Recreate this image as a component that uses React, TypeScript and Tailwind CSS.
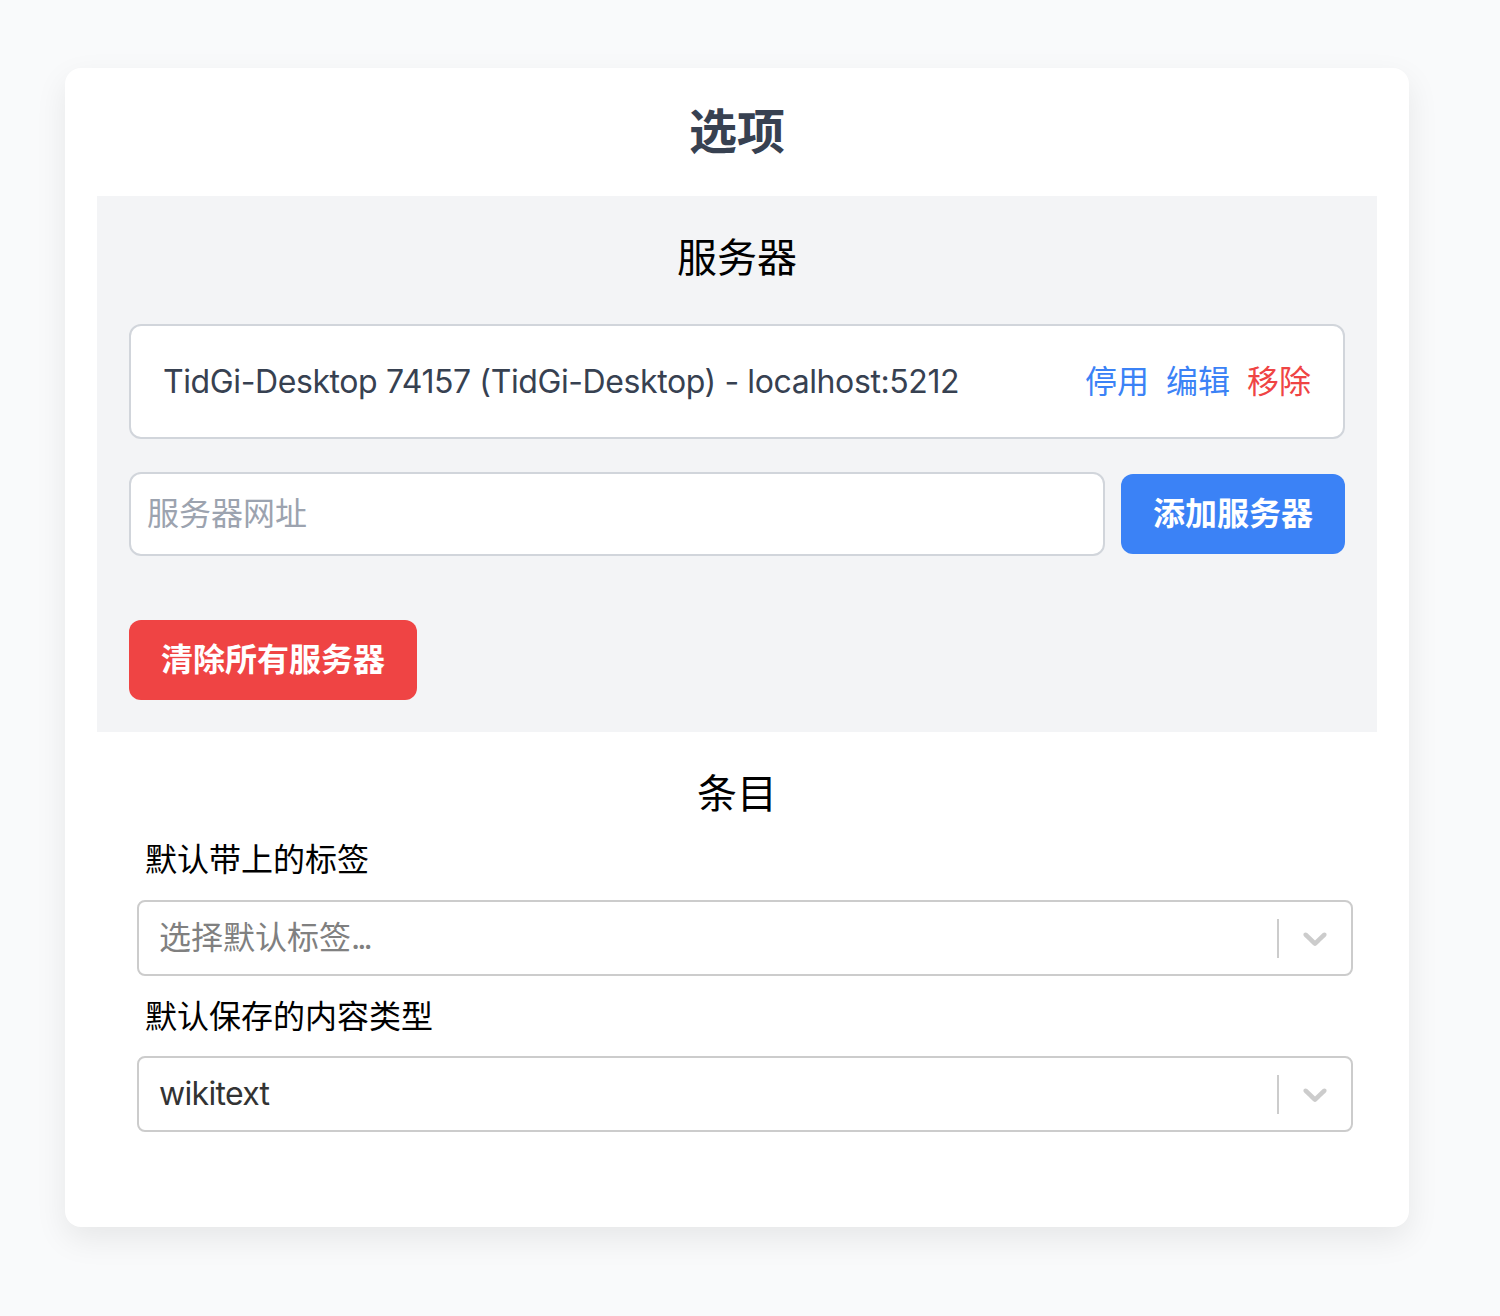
import React from "react";

const font = { fontFamily: '"Inter", "Noto Sans CJK SC", sans-serif' };

function Chevron() {
  return (
    <svg viewBox="0 0 20 20" width="40" height="40" fill="#cccccc" aria-hidden="true">
      <path d="M4.516 7.548c0.436-0.446 1.043-0.481 1.576 0l3.908 3.747 3.908-3.747c0.533-0.481 1.141-0.446 1.574 0 0.436 0.445 0.408 1.197 0 1.615-0.406 0.418-4.695 4.502-4.695 4.502-0.217 0.223-0.502 0.335-0.787 0.335s-0.57-0.112-0.789-0.335c0 0-4.287-4.084-4.695-4.502s-0.436-1.17 0-1.615z" />
    </svg>
  );
}

function SelectBox({ children, placeholder }: { children: React.ReactNode; placeholder?: boolean }) {
  return (
    <div className="flex h-[76px] items-center rounded-lg border-2 border-[#cccccc] bg-white">
      <div
        className={`flex-1 pl-[20px] text-[32px] leading-[40px] ${placeholder ? "text-[#808080]" : "text-[#333333]"}`}
      >
        {children}
      </div>
      <div className="h-[39px] w-[2px] bg-[#cccccc]" />
      <div className="flex items-center px-4">
        <Chevron />
      </div>
    </div>
  );
}

export default function App() {
  return (
    <div className="min-h-screen bg-[#f9fafb] pl-[65px] pt-[68px]" style={font}>
      <div className="w-[1344px] rounded-2xl bg-white px-8 pt-8 pb-[95px] shadow-[0_12px_32px_rgba(0,0,0,0.08)]">
        <h1 className="mb-8 text-center text-[48px] font-bold leading-[64px] text-[#374151]">选项</h1>

        <div className="bg-[#f3f4f6] p-8">
          <h2 className="mb-[36px] text-center text-[40px] leading-[60px] text-black">服务器</h2>

          <div className="flex h-[115px] items-center justify-between rounded-xl border-2 border-[#d1d5db] bg-white px-8">
            <span className="text-[32px] leading-[48px] tracking-[-0.4px] text-[#374151]">
              TidGi-Desktop 74157 (TidGi-Desktop) - localhost:5212
            </span>
            <div className="flex gap-[17px] text-[32px] leading-[48px]">
              <span className="text-[#3b82f6]">停用</span>
              <span className="text-[#3b82f6]">编辑</span>
              <span className="text-[#ef4444]">移除</span>
            </div>
          </div>

          <div className="mt-[33px] flex items-center gap-4">
            <div className="flex h-[84px] flex-1 items-center rounded-xl border-2 border-[#d1d5db] bg-white px-4 text-[32px] text-[#9ca3af]">
              服务器网址
            </div>
            <button className="h-[80px] rounded-xl bg-[#3b82f6] px-8 text-[32px] font-bold text-white">
              添加服务器
            </button>
          </div>

          <button className="mt-[64px] h-[80px] rounded-xl bg-[#ef4444] px-8 text-[32px] font-bold text-white">
            清除所有服务器
          </button>
        </div>

        <h2 className="mt-8 text-center text-[40px] leading-[60px] text-black">条目</h2>

        <div className="pl-[40px] pr-[24px]">
          <div className="mt-[12px] mb-4 pl-2 text-[32px] leading-[48px] text-black">默认带上的标签</div>
          <SelectBox placeholder>
            选择默认标签<span className="tracking-[-3px]">...</span>
          </SelectBox>
          <div className="mt-[17px] mb-[15px] pl-2 text-[32px] leading-[48px] text-black">默认保存的内容类型</div>
          <SelectBox>
            <span className="tracking-[-0.7px]">wikitext</span>
          </SelectBox>
        </div>
      </div>
    </div>
  );
}
